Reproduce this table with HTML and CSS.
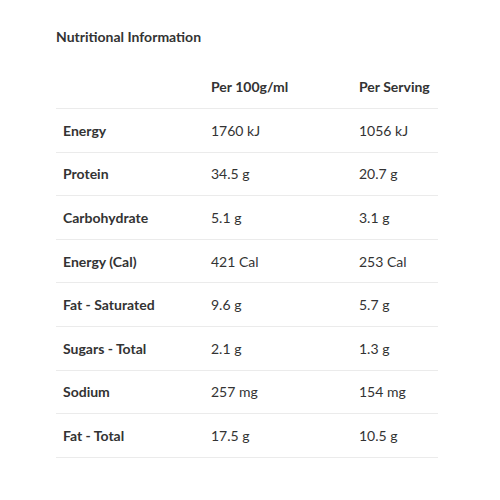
FILE: index.html
```html
<!DOCTYPE html>
<html>
<head>
<meta charset="utf-8">
<link rel="stylesheet" href="styles.css">
</head>
<body>
<div class="wrap">
  <h2 class="title">Nutritional Information</h2>
  <table class="nutri">
    <thead>
      <tr><th></th><th>Per 100g/ml</th><th>Per Serving</th></tr>
    </thead>
    <tbody>
      <tr><td>Energy</td><td>1760 kJ</td><td>1056 kJ</td></tr>
      <tr><td>Protein</td><td>34.5 g</td><td>20.7 g</td></tr>
      <tr><td>Carbohydrate</td><td>5.1 g</td><td>3.1 g</td></tr>
      <tr><td>Energy (Cal)</td><td>421 Cal</td><td>253 Cal</td></tr>
      <tr><td>Fat - Saturated</td><td>9.6 g</td><td>5.7 g</td></tr>
      <tr><td>Sugars - Total</td><td>2.1 g</td><td>1.3 g</td></tr>
      <tr><td>Sodium</td><td>257 mg</td><td>154 mg</td></tr>
      <tr><td>Fat - Total</td><td>17.5 g</td><td>10.5 g</td></tr>
    </tbody>
  </table>
</div>
</body>
</html>
```
FILE: styles.css
```css
html, body {
  margin: 0;
  padding: 0;
  background: #ffffff;
}
body {
  font-family: "Lato", "Open Sans", sans-serif;
  color: #333333;
}
.wrap {
  padding: 27px 0 0 56px;
}
.title {
  margin: 0;
  font-size: 14px;
  line-height: 20px;
  font-weight: 700;
  color: #333333;
}
.nutri {
  margin-top: 17px;
  border-collapse: collapse;
  width: 382px;
  font-size: 14px;
}
.nutri th, .nutri td {
  text-align: left;
  padding: 0 0 0 7px;
  vertical-align: middle;
  border-bottom: 1px solid #ebebeb;
}
.nutri th {
  height: 44px;
  font-weight: 700;
}
.nutri td {
  height: 42.6px;
  font-weight: 400;
}
.nutri td:first-child {
  font-weight: 700;
}
.nutri th:nth-child(1), .nutri td:nth-child(1) { width: 141px; }
.nutri th:nth-child(2), .nutri td:nth-child(2) { width: 141px; }
```
